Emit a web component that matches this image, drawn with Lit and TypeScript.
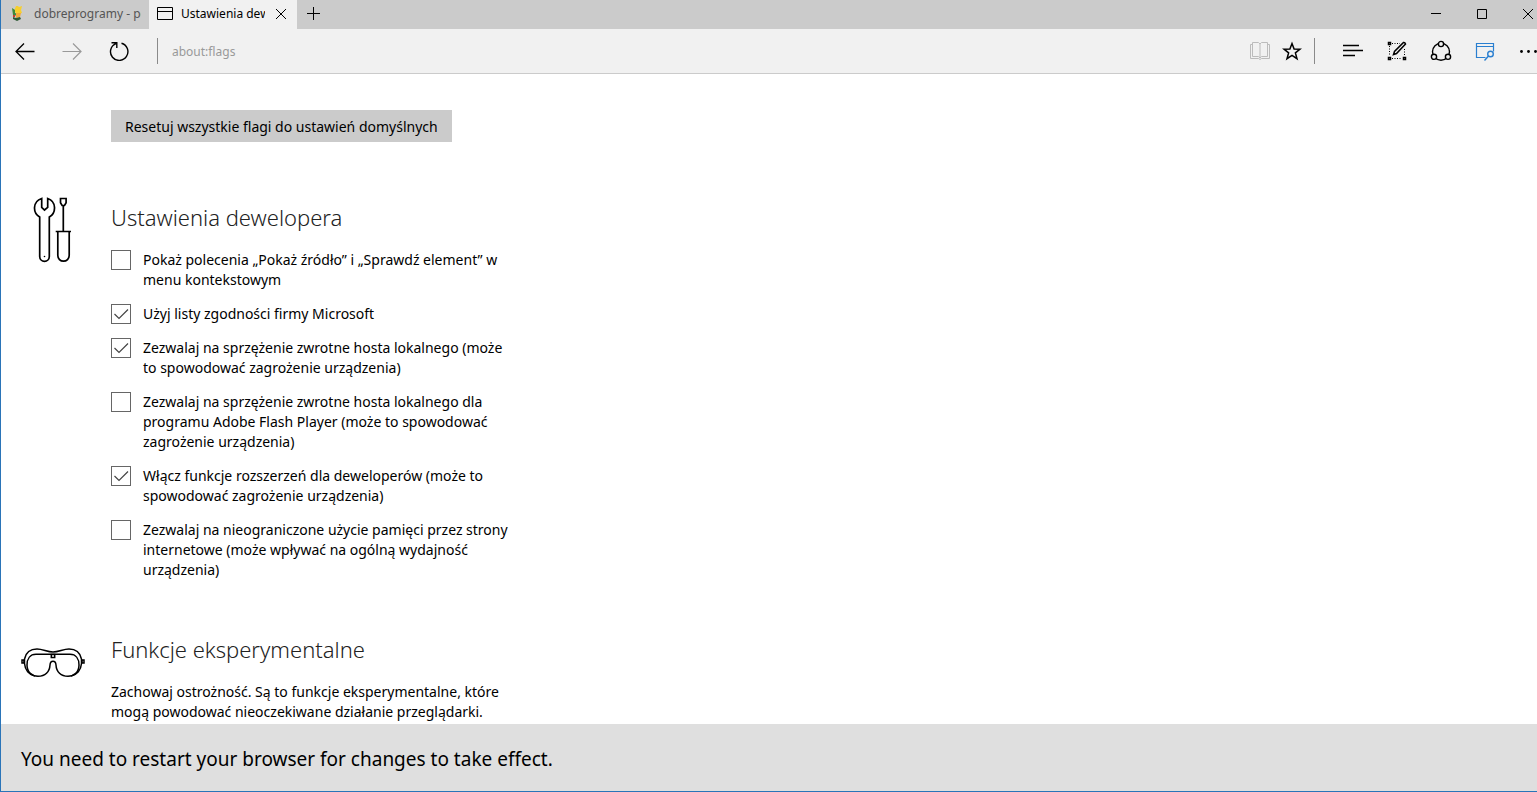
import { LitElement, html, svg, css } from "lit";
import { customElement, state } from "lit/decorators.js";

interface Flag {
  id: string;
  label: string;
  on: boolean;
}

@customElement("app-root")
export class AppRoot extends LitElement {
  @state() private flags: Flag[] = [
    { id: "source", label: "Pokaż polecenia „Pokaż źródło” i „Sprawdź element” w menu kontekstowym", on: false },
    { id: "compat", label: "Użyj listy zgodności firmy Microsoft", on: true },
    { id: "loopback", label: "Zezwalaj na sprzężenie zwrotne hosta lokalnego (może to spowodować zagrożenie urządzenia)", on: true },
    { id: "flash", label: "Zezwalaj na sprzężenie zwrotne hosta lokalnego dla programu Adobe Flash Player (może to spowodować zagrożenie urządzenia)", on: false },
    { id: "ext", label: "Włącz funkcje rozszerzeń dla deweloperów (może to spowodować zagrożenie urządzenia)", on: true },
    { id: "memory", label: "Zezwalaj na nieograniczone użycie pamięci przez strony internetowe (może wpływać na ogólną wydajność urządzenia)", on: false },
  ];

  static styles = css`
    :host {
      display: flex;
      flex-direction: column;
      box-sizing: border-box;
      height: 100vh;
      overflow: hidden;
      border-left: 1px solid #2a74b8;
      border-bottom: 1px solid #2a74b8;
      background: #fff;
      color: #000;
      font: 14px/20px "Noto Sans", "Open Sans", sans-serif;
    }
    button {
      display: flex;
      align-items: center;
      justify-content: center;
      padding: 0;
      border: 0;
      background: none;
      color: inherit;
      font: inherit;
      flex: none;
    }
    svg {
      display: block;
      flex: none;
      fill: none;
      stroke: currentColor;
    }
    .tabs {
      display: flex;
      flex: none;
      height: 29px;
      background: #cbcbcb;
      font-size: 12px;
    }
    .tab {
      display: flex;
      align-items: center;
      box-sizing: border-box;
      width: 148px;
      padding: 0 8px 2px;
      gap: 8px;
      height: 100%;
      color: #555;
    }
    .tab.active {
      background: #f1f1f1;
      color: #000;
    }
    .tab button {
      width: 16px;
    }
    .tab-title {
      flex: 1;
      min-width: 0;
      overflow: hidden;
      white-space: nowrap;
    }
    .add {
      width: 32px;
      padding-bottom: 2px;
    }
    .window {
      display: flex;
      margin-left: auto;
      margin-right: -14px;
      padding-bottom: 2px;
    }
    .window button {
      width: 46px;
    }
    .bar {
      display: flex;
      align-items: center;
      flex: none;
      height: 44px;
      background: #f1f1f1;
      border-bottom: 1px solid #cbcbcb;
    }
    .bar button {
      width: 47px;
      height: 44px;
    }
    .bar .small {
      width: 32px;
    }
    .bar .tool {
      width: 44px;
    }
    .bar .more {
      margin-right: -14px;
    }
    .dim {
      color: #999;
    }
    .faint {
      color: #bbb;
    }
    .blue {
      color: #2a7fd0;
    }
    .rule {
      width: 1px;
      height: 26px;
      background: #8a8a8a;
    }
    .rule.start {
      margin-left: 15px;
    }
    .rule.end {
      margin: 0 16px 0 6px;
    }
    .address {
      flex: 1;
      min-width: 0;
      padding: 1px 14px 0;
      border: 0;
      outline: 0;
      background: none;
      color: #999;
      font: inherit;
      font-size: 12px;
    }
    .page {
      flex: 1;
      min-height: 0;
      overflow: hidden;
      padding-top: 36px;
    }
    .reset {
      height: 32px;
      margin-left: 110px;
      padding: 1px 14px 0;
      background: #cbcbcb;
    }
    .section {
      display: grid;
      grid-template-columns: 64px minmax(0, 400px);
      column-gap: 26px;
      padding: 0 20px 34px;
    }
    .reset + .section {
      margin-top: 54px;
    }
    h1 {
      margin: 5px 0 17px;
      font-size: 22px;
      line-height: 32px;
      font-weight: 300;
      color: #222;
    }
    p {
      margin: 0;
    }
    .flag {
      display: flex;
      gap: 12px;
      margin-bottom: 14px;
    }
    .flag input {
      appearance: none;
      flex: none;
      width: 20px;
      height: 20px;
      margin: 0;
      border: 1px solid #666;
      background: #fff;
    }
    .box {
      display: grid;
      flex: none;
      height: 20px;
    }
    .box > * {
      grid-area: 1 / 1;
    }
    .box svg {
      color: #444;
      pointer-events: none;
    }
    .notice {
      flex: none;
      padding: 21px 20px 18px;
      background: #dfdfdf;
      font-size: 19px;
      line-height: 28px;
    }
  `;

  private toggle(id: string) {
    this.flags = this.flags.map((f) => (f.id === id ? { ...f, on: !f.on } : f));
  }

  private reset() {
    this.flags = this.flags.map((f) => ({ ...f, on: f.id === "compat" }));
  }

  private icon(w: number, h: number, body: unknown) {
    return html`<svg width=${w} height=${h} viewBox="0 0 ${w} ${h}" aria-hidden="true">${body}</svg>`;
  }

  render() {
    return html`
      <header class="tabs">
        <div class="tab">
          ${this.icon(17, 17, svg`<g stroke="none"><path fill="#f6cf2e" d="M7 1h2l1 1 3-1-1 4 1 3-5 1-3-3z"/><path fill="#3f8a3a" d="M3 3l3 2v3l3 1v2l-5-1z"/><path fill="#f2a93a" d="M7 8l5 0-1 4-4 1z"/><path fill="#c93a2a" d="M4 10l2 0 0 2-2 0z"/><path fill="#2c5a34" d="M4 12l3 1 4-1 1 2-4 2-4-2z"/></g>`)}
          <span class="tab-title">dobreprogramy - portal</span>
        </div>
        <div class="tab active">
          ${this.icon(16, 14, svg`<path d="M.5.5h15v12H.5zM.5 4.500h15"/>`)}
          <span class="tab-title">Ustawienia dewelopera</span>
          <button aria-label="Zamknij kartę">${this.icon(12, 12, svg`<path d="M1 1l10 10M11 1L1 11"/>`)}</button>
        </div>
        <button class="add" aria-label="Nowa karta">${this.icon(13, 13, svg`<path d="M6.500 0v13M0 6.500h13"/>`)}</button>
        <div class="window">
          <button aria-label="Minimalizuj">${this.icon(10, 10, svg`<path d="M0 4.500h10"/>`)}</button>
          <button aria-label="Maksymalizuj">${this.icon(10, 10, svg`<path d="M.5.5h9v9h-9z"/>`)}</button>
          <button aria-label="Zamknij">${this.icon(10, 10, svg`<path d="M0 0l10 10M10 0L0 10"/>`)}</button>
        </div>
      </header>
      <nav class="bar">
        <button aria-label="Wstecz">${this.icon(20, 18, svg`<path stroke-width="1.300" d="M19.500 9.500H1M9 1.500l-8 8 8 8"/>`)}</button>
        <button class="dim" aria-label="Dalej">${this.icon(20, 18, svg`<path stroke-width="1.200" d="M.5 9.500H19M11 1.500l8 8-8 8"/>`)}</button>
        <button aria-label="Odśwież">${this.icon(20, 20, svg`<path stroke-width="1.400" d="M12.500 2.300A8.700 8.700 0 1 1 7 2.600M2.500 1.700h5.300V7"/>`)}</button>
        <span class="rule start"></span>
        <input class="address" aria-label="Adres" value="about:flags" />
        <button class="small faint" aria-label="Widok do czytania">${this.icon(20, 18, svg`<path d="M2.500 2.500h-2v14h8l1.500 1 1.500-1h8v-14h-2M2.500.5h6L10 2l1.500-1.500h6v14h-6L10 16l-1.500-1.500h-6zM10 2v14"/>`)}</button>
        <button class="small" aria-label="Ulubione">${this.icon(20, 20, svg`<path stroke-width="1.500" d="M10 2.500l2.100 5.500 5.900.2-4.600 3.700 1.600 5.800-5-3.300-5 3.300 1.600-5.800L2 8.200l5.900-.2z"/>`)}</button>
        <span class="rule end"></span>
        <button class="tool" aria-label="Centrum">${this.icon(20, 14, svg`<path stroke-width="1.500" d="M0 1.500h16M0 6.500h20M0 11.500h12"/>`)}</button>
        <button class="tool" aria-label="Notatka">${this.icon(20, 20, svg`<path stroke-dasharray="1 1.500" d="M5 2.500h8M2.500 5v10M5 17.500h10M17.500 8v7"/><g stroke-width="1.500"><path d="M1.500 1.500h2v2h-2zM1.500 16.500h2v2h-2zM16.500 16.500h2v2h-2z"/><path d="M6.500 13.500l1-3L16.500 1.500q1.500-.3 2 1.500l-9 9.500z"/></g>`)}</button>
        <button class="tool" aria-label="Udostępnij">${this.icon(22, 22, svg`<g stroke-width="1.400"><circle cx="11" cy="11.700" r="8.500"/><g fill="#f1f1f1"><circle cx="11" cy="4" r="2.600"/><circle cx="4" cy="16.800" r="2.600"/><circle cx="18" cy="16.800" r="2.600"/></g></g>`)}</button>
        <button class="tool blue" aria-label="Opinie">${this.icon(20, 20, svg`<path stroke-width="1.200" d="M10.500 16.500H1.500v-14h17v8M1.500 5.500h17"/><g stroke-width="1.400"><circle cx="15.500" cy="13" r="2.800"/><path d="M13.500 15L9.500 19.500"/></g>`)}</button>
        <button class="tool more" aria-label="Więcej">${this.icon(18, 4, svg`<g fill="currentColor" stroke="none"><circle cx="1.500" cy="2.500" r="1.400"/><circle cx="8.500" cy="2.500" r="1.400"/><circle cx="15.500" cy="2.500" r="1.400"/></g>`)}</button>
      </nav>
      <main class="page">
        <button class="reset" @click=${this.reset}>Resetuj wszystkie flagi do ustawień domyślnych</button>
        <section class="section">
          ${this.icon(64, 68, svg`<g stroke-width="1.700"><path d="M20.700 2.500v8.800l2.800 2.700 3.200-2.700V2.500C35.500 5.500 35.500 17 28.300 21v39.500a4.800 4.800 0 0 1-9.600 0V21C11.500 17 11.500 5.500 20.700 2.500z"/><path d="M39.500 2.500h5.600v4.300L43.500 9.500h-2.400l-1.600-2.700zM42.300 9.500v26M34.700 35.500H50M36.800 35.500v24a5.700 5.700 0 0 0 11.400 0v-24"/></g><circle cx="23.500" cy="60.500" r=".8" fill="currentColor" stroke="none"/>`)}
          <div>
            <h1>Ustawienia dewelopera</h1>
            ${this.flags.map(
              (f) => html`<div class="flag">
                <span class="box">
                  <input type="checkbox" id=${f.id} .checked=${f.on} @change=${() => this.toggle(f.id)} />
                  ${f.on ? this.icon(20, 20, svg`<path stroke-width="1.200" d="M3.500 10l4.500 4.500 9-9"/>`) : ""}
                </span>
                <label for=${f.id}>${f.label}</label>
              </div>`
            )}
          </div>
        </section>
        <section class="section">
          ${this.icon(64, 52, svg`<g stroke-width="1.500"><path d="M3.500 31C5 24 10 21 16 21c6 0 10 3 16 3s10-3 16-3 11 3 12.500 10M3.500 31v4.500C4 42 8 47 14 48M60.500 31v4.500C60 42 56 47 50 48"/><path d="M15 26.300h34c6 0 9 4.700 9 10.700 0 7-5 11.300-11 11.300-7 0-11.700-4.300-12-11.300-.2-3-1.500-3.700-3-3.700s-2.800.7-3 3.700c-.3 7-5 11.300-12 11.300C11 48.300 6 44 6 37c0-6 3-10.700 9-10.700z"/><path d="M30.300 26.500h3.400v3h-3.400z"/><path d="M1 32h2v3H1zM61 32h2v3h-2z"/></g>`)}
          <div>
            <h1>Funkcje eksperymentalne</h1>
            <p>Zachowaj ostrożność. Są to funkcje eksperymentalne, które mogą powodować nieoczekiwane działanie przeglądarki.</p>
          </div>
        </section>
      </main>
      <footer class="notice" role="status">You need to restart your browser for changes to take effect.</footer>
    `;
  }
}
